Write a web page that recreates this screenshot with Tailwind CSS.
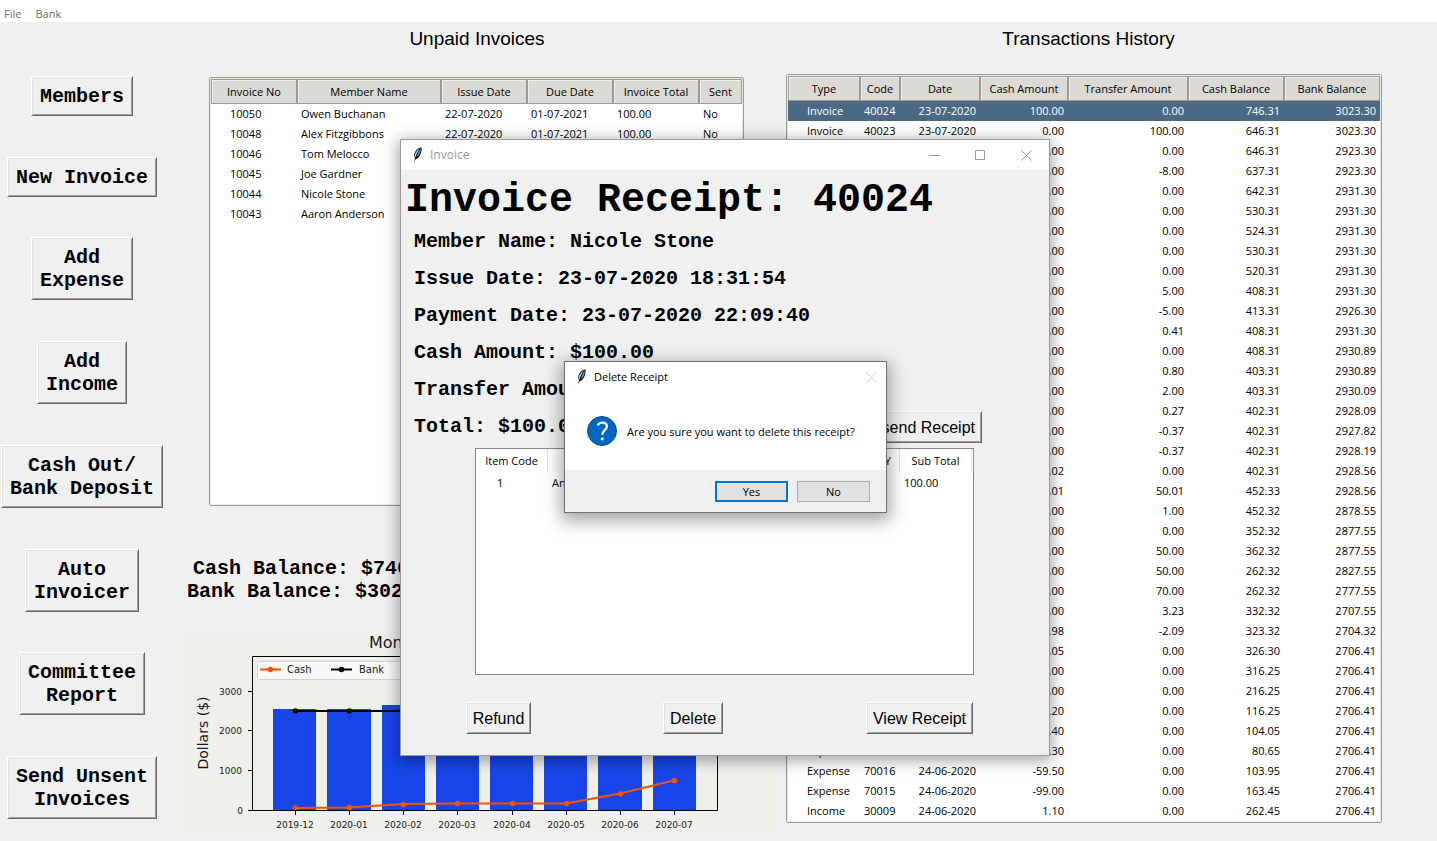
<!DOCTYPE html>
<html lang="en">
<head>
<meta charset="utf-8">
<title>Club Accounts</title>
<script src="https://cdn.jsdelivr.net/npm/@tailwindcss/browser@4"></script>
</head>
<body class="relative min-h-screen bg-[#f0f0f0] text-black font-['Open_Sans',sans-serif] text-[11px] leading-5">

<header class="flex h-[22px] items-end gap-[14px] bg-white pl-1 text-[#6d6d6d]">
  <button type="button" class="leading-4">File</button>
  <button type="button" class="leading-4">Bank</button>
</header>

<main class="grid grid-cols-[164px_minmax(0,612fr)_minmax(0,606fr)] pr-[55px]">

  <nav aria-label="Actions" class="flex flex-col items-center justify-between pt-[54px] pb-[13px] font-['Liberation_Mono',monospace] text-[20px] leading-[23px] font-bold">
    <button type="button" class="border border-t-white border-l-white border-r-[#696969] border-b-[#696969] px-2 pt-2 pb-[7px] shadow-[inset_1px_1px_0_#e3e3e3,inset_-1px_-1px_0_#a0a0a0]">Members</button>
    <button type="button" class="border border-t-white border-l-white border-r-[#696969] border-b-[#696969] px-2 pt-2 pb-[7px] shadow-[inset_1px_1px_0_#e3e3e3,inset_-1px_-1px_0_#a0a0a0]">New Invoice</button>
    <button type="button" class="border border-t-white border-l-white border-r-[#696969] border-b-[#696969] px-2 pt-2 pb-[7px] shadow-[inset_1px_1px_0_#e3e3e3,inset_-1px_-1px_0_#a0a0a0]">Add<br>Expense</button>
    <button type="button" class="border border-t-white border-l-white border-r-[#696969] border-b-[#696969] px-2 pt-2 pb-[7px] shadow-[inset_1px_1px_0_#e3e3e3,inset_-1px_-1px_0_#a0a0a0]">Add<br>Income</button>
    <button type="button" class="border border-t-white border-l-white border-r-[#696969] border-b-[#696969] px-2 pt-2 pb-[7px] shadow-[inset_1px_1px_0_#e3e3e3,inset_-1px_-1px_0_#a0a0a0]">Cash Out/<br>Bank Deposit</button>
    <button type="button" class="border border-t-white border-l-white border-r-[#696969] border-b-[#696969] px-2 pt-2 pb-[7px] shadow-[inset_1px_1px_0_#e3e3e3,inset_-1px_-1px_0_#a0a0a0]">Auto<br>Invoicer</button>
    <button type="button" class="border border-t-white border-l-white border-r-[#696969] border-b-[#696969] px-2 pt-2 pb-[7px] shadow-[inset_1px_1px_0_#e3e3e3,inset_-1px_-1px_0_#a0a0a0]">Committee<br>Report</button>
    <button type="button" class="border border-t-white border-l-white border-r-[#696969] border-b-[#696969] px-2 pt-2 pb-[7px] shadow-[inset_1px_1px_0_#e3e3e3,inset_-1px_-1px_0_#a0a0a0]">Send Unsent<br>Invoices</button>
  </nav>

  <section class="flex flex-col pl-[14px]">
    <h2 class="pt-[7px] text-center font-['Liberation_Sans',sans-serif] text-[19px] leading-5">Unpaid Invoices</h2>
    <div class="mr-8 ml-[31px] mt-[28px] h-[429px] rounded-[2px] border border-[#9e9a91] bg-white">
      <div class="h-full border border-[#eeebe7]">
      <table class="w-full table-fixed border-separate border-spacing-0">
        <colgroup><col class="w-[86px]"><col class="w-[144px]"><col class="w-[86px]"><col class="w-[86px]"><col class="w-[86px]"><col class="w-[43px]"></colgroup>
        <thead id="inv-head"></thead>
        <tbody id="inv-body"></tbody>
      </table>
      </div>
    </div>
    <p class="mt-[51px] ml-[9px] self-start text-center font-['Liberation_Mono',monospace] text-[20px] leading-[23px] font-bold whitespace-nowrap">Cash Balance: $746.31<br>Bank Balance: $3023.30</p>
    <svg class="mt-[29px] block w-full bg-[#f0f0eb] font-['DejaVu_Sans',sans-serif]" viewBox="0 0 598 200" role="img" aria-label="Monthly cash and bank balances">
      <text x="191" y="16" font-size="16" fill="#1a1a1a">Monthly</text>
      <g fill="#1845e9">
        <rect x="95" y="77" width="43" height="101"/><rect x="149" y="77" width="44" height="101"/>
        <rect x="204" y="73" width="43" height="105"/><rect x="258" y="72" width="43" height="106"/>
        <rect x="312" y="72" width="43" height="106"/><rect x="366" y="72" width="43" height="106"/>
        <rect x="420" y="70" width="44" height="108"/><rect x="475" y="66" width="43" height="112"/>
      </g>
      <rect x="79.500" y="29.500" width="200" height="18" rx="2" fill="#f8f8f6" stroke="#d2d2ce"/>
      <g stroke-width="2" fill="none">
        <path d="M82 37.500h21" stroke="#f25202"/><path d="M153 37.500h21" stroke="#000"/>
        <path d="M117 79H279" stroke="#000"/>
        <path d="M117 176L171 175.500L225 172L279 171.500H388L442 161.500L496 148.500" stroke="#f25202"/>
      </g>
      <g fill="#000"><circle cx="163.500" cy="37.500" r="2.800"/><circle cx="117.500" cy="79" r="2.800"/><circle cx="171.500" cy="79" r="2.800"/></g>
      <g fill="#f25202"><circle cx="92.500" cy="37.500" r="2.800"/><circle cx="117.500" cy="176" r="2.800"/><circle cx="171.500" cy="175.500" r="2.800"/><circle cx="225.500" cy="172.500" r="2.800"/><circle cx="279.500" cy="171.500" r="2.800"/><circle cx="334.500" cy="171.500" r="2.800"/><circle cx="388.500" cy="171.500" r="2.800"/><circle cx="442.500" cy="162" r="2.800"/><circle cx="496.500" cy="148.500" r="2.800"/></g>
      <path fill="none" stroke="#000" d="M74.500 24.500H539.500V178.500H74.500zM70 59.500h4M70 98.500h4M70 138.500h4M70 178.500h4M117.500 179v4M171.500 179v4M225.500 179v4M279.500 179v4M334.500 179v4M388.500 179v4M442.500 179v4M496.500 179v4"/>
      <g font-size="10" fill="#1a1a1a"><text x="109" y="41">Cash</text><text x="181" y="41">Bank</text></g>
      <g font-size="9" fill="#1a1a1a" text-anchor="end"><text x="64" y="63">3000</text><text x="64" y="102">2000</text><text x="64" y="142">1000</text><text x="65" y="182">0</text></g>
      <g font-size="9" fill="#1a1a1a" text-anchor="middle"><text x="117" y="196">2019-12</text><text x="171" y="196">2020-01</text><text x="225" y="196">2020-02</text><text x="279" y="196">2020-03</text><text x="334" y="196">2020-04</text><text x="388" y="196">2020-05</text><text x="442" y="196">2020-06</text><text x="496" y="196">2020-07</text></g>
      <text transform="rotate(-90 30 101)" x="30" y="101" font-size="14" text-anchor="middle" fill="#1a1a1a">Dollars ($)</text>
    </svg>
  </section>

  <section class="pl-[10px]">
    <h2 class="pt-[7px] pl-[9px] text-center font-['Liberation_Sans',sans-serif] text-[19px] leading-5">Transactions History</h2>
    <div class="mt-[25px] rounded-[2px] border border-[#9e9a91] bg-white">
      <div class="border border-[#eeebe7]">
      <table class="w-full table-fixed border-separate border-spacing-0">
        <colgroup><col class="w-[72px]"><col class="w-[40px]"><col class="w-[80px]"><col class="w-[88px]"><col class="w-[120px]"><col class="w-[96px]"><col class="w-[96px]"></colgroup>
        <thead id="tx-head"></thead>
        <tbody id="tx-body"></tbody>
      </table>
      </div>
    </div>
  </section>
</main>

<!-- Invoice receipt window -->
<section aria-label="Invoice" class="absolute top-[139px] left-[400px] w-[650px] border border-[#9a9a9a] bg-[#f0f0f0] pb-[21px] shadow-[0_3px_14px_2px_rgba(0,0,0,0.35)]">
  <div class="flex h-[30px] items-center bg-white pl-[9px] text-[#999]">
    <svg class="mr-[5px] h-4 w-[15px]" viewBox="0 0 15 16" aria-hidden="true"><path d="M4 15.500L5 11C3.500 9 4 5.500 6.500 3C8.500 1 10.500 0.500 11.500 0.500C12 3.500 11 8 8.500 10.500C7.500 11.500 6.500 12 5.800 12Z" fill="#141414"/><path d="M5.200 10C4.500 8 5.200 5.500 7 3.800C8 2.700 9 2 9.800 1.700C8 4 6.200 7 5.800 10Z" fill="#a9cdf5"/><path d="M10.700 1.800C11 4.500 9.800 8 7 10.200C7.300 7 8.800 4 10.700 1.800Z" fill="#4a86d0"/></svg>
    <h1 class="text-xs">Invoice</h1>
    <div class="ml-auto flex items-center gap-[35px] pr-[17px]">
      <button type="button" aria-label="Minimize"><svg class="h-[11px] w-[11px]" viewBox="0 0 11 11" fill="none" stroke="#999"><path d="M0 5.500h11"/></svg></button>
      <button type="button" aria-label="Maximize"><svg class="h-[11px] w-[11px]" viewBox="0 0 11 11" fill="none" stroke="#999"><path d="M0.500 0.500h9v9h-9z"/></svg></button>
      <button type="button" aria-label="Close"><svg class="h-[11px] w-[11px]" viewBox="0 0 11 11" fill="none" stroke="#999"><path d="M0.500 0.500l10 10M10.500 0.500l-10 10"/></svg></button>
    </div>
  </div>
  <div class="font-['Liberation_Mono',monospace] text-[20px] leading-[37px] font-bold">
    <h2 class="pt-2 pl-1 text-[40px] leading-[45px]">Invoice Receipt: 40024</h2>
    <div class="pl-[13px]">
      <p>Member Name: Nicole Stone</p>
      <p>Issue Date: 23-07-2020 18:31:54</p>
      <p>Payment Date: 23-07-2020 22:09:40</p>
      <p>Cash Amount: $100.00</p>
      <p>Transfer Amount: $0.00</p>
      <div class="flex items-center justify-between pr-[67px]">
        <p>Total: $100.00</p>
        <button type="button" class="border border-t-white border-l-white border-r-[#696969] border-b-[#696969] px-[6px] pt-[2px] font-['Liberation_Sans',sans-serif] text-base leading-7 font-normal shadow-[inset_1px_1px_0_#e3e3e3,inset_-1px_-1px_0_#a0a0a0]">Resend Receipt</button>
      </div>
    </div>
  </div>
  <div class="mt-[3px] mr-[75px] ml-[74px] h-[227px] border border-[#828790] bg-white pr-[1px]">
    <table class="w-full table-fixed border-separate border-spacing-0">
      <colgroup><col class="w-[72px]"><col><col class="w-[72px]"><col class="w-[72px]"></colgroup>
      <thead><tr>
        <th class="h-6 border-r border-[#e5e5e5] font-normal">Item Code</th>
        <th class="border-r border-[#e5e5e5] font-normal"></th>
        <th class="border-r border-[#e5e5e5] pr-2 text-right font-normal">QTY</th>
        <th class="border-r border-[#e5e5e5] font-normal">Sub Total</th>
      </tr></thead>
      <tbody><tr>
        <td class="pl-[21px]">1</td><td class="pl-1">An</td><td></td><td class="pl-1">100.00</td>
      </tr></tbody>
    </table>
  </div>
  <div class="mt-[27px] grid grid-cols-[195fr_194fr_259fr] justify-items-center font-['Liberation_Sans',sans-serif] text-base leading-7">
    <button type="button" class="border border-t-white border-l-white border-r-[#696969] border-b-[#696969] px-[6px] pt-[2px] shadow-[inset_1px_1px_0_#e3e3e3,inset_-1px_-1px_0_#a0a0a0]">Refund</button>
    <button type="button" class="border border-t-white border-l-white border-r-[#696969] border-b-[#696969] px-[6px] pt-[2px] shadow-[inset_1px_1px_0_#e3e3e3,inset_-1px_-1px_0_#a0a0a0]">Delete</button>
    <button type="button" class="border border-t-white border-l-white border-r-[#696969] border-b-[#696969] px-[6px] pt-[2px] shadow-[inset_1px_1px_0_#e3e3e3,inset_-1px_-1px_0_#a0a0a0]">View Receipt</button>
  </div>
</section>

<!-- Confirmation dialog -->
<div role="dialog" aria-labelledby="dlg-title" class="absolute top-[361px] left-[564px] w-[323px] border border-[#6f6f6f] bg-white shadow-[0_5px_16px_3px_rgba(0,0,0,0.35)]">
  <div class="flex h-[30px] items-center pl-[9px]">
    <svg class="mr-[5px] h-4 w-[15px]" viewBox="0 0 15 16" aria-hidden="true"><path d="M4 15.500L5 11C3.500 9 4 5.500 6.500 3C8.500 1 10.500 0.500 11.500 0.500C12 3.500 11 8 8.500 10.500C7.500 11.500 6.500 12 5.800 12Z" fill="#141414"/><path d="M5.200 10C4.500 8 5.200 5.500 7 3.800C8 2.700 9 2 9.800 1.700C8 4 6.200 7 5.800 10Z" fill="#a9cdf5"/><path d="M10.700 1.800C11 4.500 9.800 8 7 10.200C7.300 7 8.800 4 10.700 1.800Z" fill="#4a86d0"/></svg>
    <h2 id="dlg-title">Delete Receipt</h2>
    <button type="button" aria-label="Close" class="mr-[9px] ml-auto"><svg class="h-[11px] w-[11px]" viewBox="0 0 11 11" fill="none" stroke="#ccc"><path d="M0.500 0.500l10 10M10.500 0.500l-10 10"/></svg></button>
  </div>
  <div class="flex h-[78px] items-center gap-[10px] pl-[22px]">
    <svg class="h-[30px] w-[30px]" viewBox="0 0 30 30" aria-hidden="true"><circle cx="15" cy="15" r="14.500" fill="#0067c0" stroke="#0d4f8b"/><path d="M10.800 9.500C11.500 7.500 13 6.600 15.300 6.600C18.200 6.600 19.900 8.100 19.900 10.500C19.900 14 15.300 14.400 15.300 18.800" fill="none" stroke="#fff" stroke-width="2.200"/><circle cx="15.300" cy="22.800" r="1.600" fill="#fff"/></svg>
    <p class="pt-px">Are you sure you want to delete this receipt?</p>
  </div>
  <div class="flex h-[42px] items-center justify-end gap-[9px] bg-[#f0f0f0] pr-4">
    <button type="button" class="h-[21px] w-[73px] border-2 border-[#0078d7] bg-[#e1e1e1] pt-px leading-4">Yes</button>
    <button type="button" class="h-[21px] w-[73px] border border-[#adadad] bg-[#e1e1e1] pt-px leading-4">No</button>
  </div>
</div>

<script>
const head = (id, names, height) => {
  document.getElementById(id).innerHTML = '<tr>' + names.map(n =>
    `<th class="${height} border border-[#9e9a91] bg-[#dcdad5] p-0 font-normal whitespace-nowrap shadow-[inset_1px_1px_0_#f2f0ec]">${n}</th>`).join('') + '</tr>';
};
head('inv-head', ['Invoice No', 'Member Name', 'Issue Date', 'Due Date', 'Invoice Total', 'Sent'], 'h-[25px]');
head('tx-head', ['Type', 'Code', 'Date', 'Cash Amount', 'Transfer Amount', 'Cash Balance', 'Bank Balance'], 'h-[25px]');

const invoices = [
  ['10050', 'Owen Buchanan', '22-07-2020', '01-07-2021', '100.00', 'No'],
  ['10048', 'Alex Fitzgibbons', '22-07-2020', '01-07-2021', '100.00', 'No'],
  ['10046', 'Tom Melocco', '', '', '', ''],
  ['10045', 'Joe Gardner', '', '', '', ''],
  ['10044', 'Nicole Stone', '', '', '', ''],
  ['10043', 'Aaron Anderson', '', '', '', ''],
];
document.getElementById('inv-body').innerHTML = invoices.map(r => '<tr>' + r.map((c, i) =>
  `<td class="h-5 py-0 pr-0 whitespace-nowrap ${i ? 'pl-1' : 'pl-[19px]'}">${c}</td>`).join('') + '</tr>').join('');

const transactions = `Invoice|40024|23-07-2020|100.00|0.00|746.31|3023.30
Invoice|40023|23-07-2020|0.00|100.00|646.31|3023.30
|||9.00|0.00|646.31|2923.30
|||-5.00|-8.00|637.31|2923.30
|||112.00|0.00|642.31|2931.30
|||6.00|0.00|530.31|2931.30
|||-6.00|0.00|524.31|2931.30
|||10.00|0.00|530.31|2931.30
|||112.00|0.00|520.31|2931.30
|||-5.00|5.00|408.31|2931.30
|||5.00|-5.00|413.31|2926.30
|||0.00|0.41|408.31|2931.30
|||5.00|0.00|408.31|2930.89
|||0.00|0.80|403.31|2930.89
|||1.00|2.00|403.31|2930.09
|||0.00|0.27|402.31|2928.09
|||0.00|-0.37|402.31|2927.82
|||0.00|-0.37|402.31|2928.19
|||-50.02|0.00|402.31|2928.56
|||0.01|50.01|452.33|2928.56
|||100.00|1.00|452.32|2878.55
|||-10.00|0.00|352.32|2877.55
|||100.00|50.00|362.32|2877.55
|||0.00|50.00|262.32|2827.55
|||-70.00|70.00|262.32|2777.55
|||9.00|3.23|332.32|2707.55
|||-2.98|-2.09|323.32|2704.32
|||10.05|0.00|326.30|2706.41
|||100.00|0.00|316.25|2706.41
|||100.00|0.00|216.25|2706.41
|||12.20|0.00|116.25|2706.41
|||23.40|0.00|104.05|2706.41
Expense|||-23.30|0.00|80.65|2706.41
Expense|70016|24-06-2020|-59.50|0.00|103.95|2706.41
Expense|70015|24-06-2020|-99.00|0.00|163.45|2706.41
Income|30009|24-06-2020|1.10|0.00|262.45|2706.41`.split('\n').map(l => l.split('|'));
document.getElementById('tx-body').innerHTML = transactions.map((r, n) =>
  `<tr class="${n ? '' : 'bg-[#4a6984] text-white'}">` + r.map((c, i) =>
    `<td class="h-5 py-0 whitespace-nowrap ${i === 0 ? 'pl-[19px] pr-0' : i === 1 ? 'pl-1 pr-0' : 'pl-0 pr-1 text-right'}">${c}</td>`).join('') + '</tr>').join('');
</script>
</body>
</html>
